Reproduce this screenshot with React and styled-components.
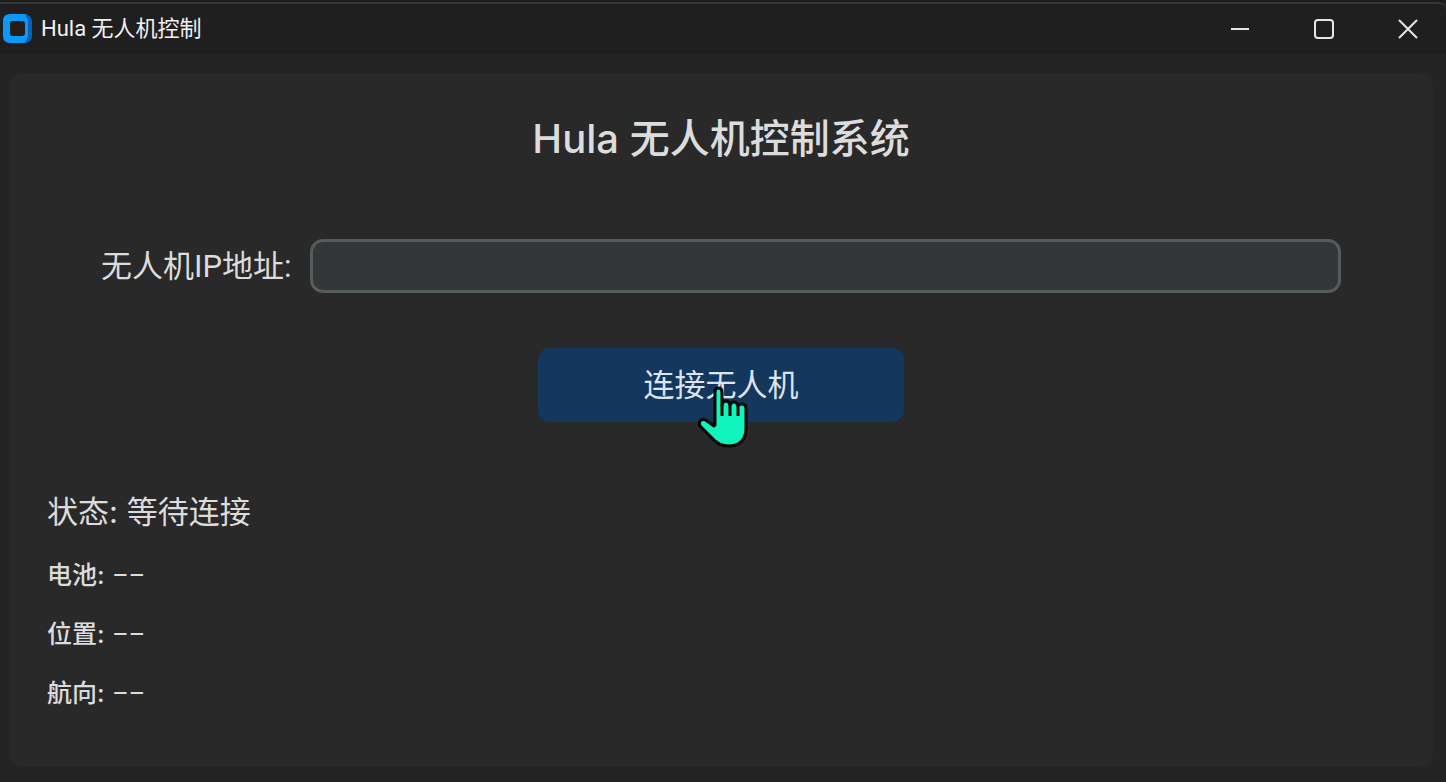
import React from "react";
import styled, { createGlobalStyle } from "styled-components";

const GlobalStyle = createGlobalStyle`
  * { box-sizing: border-box; }
  body {
    margin: 0;
    background: #242424;
    color: #dcdcdc;
    font-family: Roboto, "Noto Sans CJK SC", sans-serif;
  }
`;

const Window = styled.div`
  min-height: 100vh;
  display: flex;
  flex-direction: column;
  background: #242424;
  border-top: 2px solid #1c1c1c;
`;

const TitleBar = styled.header`
  display: flex;
  align-items: center;
  height: 52px;
  padding-left: 3px;
  background: #1f1f1f;
  border-top: 2px solid #363636;
  border-top-right-radius: 8px;
`;

const AppName = styled.span`
  flex: 1;
  margin-left: 8px;
  font-size: 22px;
  line-height: 32px;
  color: #f2f2f2;
`;

const WindowControls = styled.div`
  display: flex;
  gap: 8px;
`;

const WindowButton = styled.button`
  display: grid;
  place-items: center;
  width: 76px;
  height: 48px;
  padding: 0;
  border: 0;
  background: none;
  color: #e6e6e6;
`;

const Panel = styled.main`
  flex: 1;
  display: flex;
  flex-direction: column;
  margin: 19px 13px 15px 9px;
  padding: 36px 38px 0;
  border-radius: 14px;
  background: #292929;
`;

const Heading = styled.h1`
  margin: 0;
  font-family: Inter, "Noto Sans CJK SC", sans-serif;
  font-size: 40px;
  line-height: 60px;
  font-weight: 500;
  text-align: center;
`;

const AddressRow = styled.div`
  display: flex;
  align-items: center;
  gap: 18px;
  margin: 70px 54px 0;
`;

const AddressLabel = styled.label`
  padding-top: 2px;
  font-size: 31px;
  line-height: 48px;
`;

const AddressInput = styled.input`
  flex: 1;
  min-width: 0;
  height: 54px;
  padding: 0 14px;
  border: 3px solid #565b5e;
  border-radius: 13px;
  outline: 0;
  background: #343638;
  color: #dcdcdc;
  font: inherit;
  font-size: 31px;
`;

const ConnectButton = styled.button`
  position: relative;
  align-self: center;
  width: 366px;
  height: 74px;
  margin-top: 55px;
  padding: 0 0 6px;
  border: 0;
  border-radius: 12px;
  background: #14375e;
  color: #dce4ee;
  font: inherit;
  font-size: 31px;
`;

const Pointer = styled.svg`
  position: absolute;
  left: 158px;
  top: 37px;
  pointer-events: none;
`;

const StatusList = styled.section`
  display: flex;
  flex-direction: column;
  margin-top: 66px;
  font-family: Inter, "Noto Sans CJK SC", sans-serif;
`;

const Status = styled.p`
  margin: 0 0 10px;
  font-size: 31px;
  line-height: 48px;
`;

const Reading = styled.p`
  margin: 0;
  font-size: 25px;
  line-height: 58px;
  font-weight: 500;
`;

const Value = styled.span`
  margin-left: 1px;
  font-family: Roboto, sans-serif;
  font-weight: 400;
`;

const readings = ["电池", "位置", "航向"];

export default function App() {
  return (
    <>
      <GlobalStyle />
      <Window>
        <TitleBar>
          <svg width="30" height="30" viewBox="0 0 30 30" aria-hidden="true">
            <path d="M7 0H23L26 4V25L23 29H7Q0 29 0 22V7Q0 0 7 0Z" fill="#0c98f8" />
            <path d="M22 0Q29 1 29 8V22Q29 28 22 29L25 22V7Z" fill="#0861b4" />
            <rect x="7" y="7" width="15" height="15" rx="3" fill="#241d1a" />
          </svg>
          <AppName>Hula 无人机控制</AppName>
          <WindowControls>
            <WindowButton aria-label="最小化">
              <svg width="20" height="20"><path d="M1 10H19" stroke="currentColor" strokeWidth="2" /></svg>
            </WindowButton>
            <WindowButton aria-label="最大化">
              <svg width="20" height="20" fill="none"><rect x="1" y="1" width="18" height="18" rx="3" stroke="currentColor" strokeWidth="2" /></svg>
            </WindowButton>
            <WindowButton aria-label="关闭">
              <svg width="20" height="20"><path d="M1 1L19 19M19 1L1 19" stroke="currentColor" strokeWidth="2" /></svg>
            </WindowButton>
          </WindowControls>
        </TitleBar>
        <Panel>
          <Heading>Hula 无人机控制系统</Heading>
          <AddressRow>
            <AddressLabel htmlFor="ip">无人机IP地址:</AddressLabel>
            <AddressInput id="ip" type="text" />
          </AddressRow>
          <ConnectButton type="button">
            连接无人机
            <Pointer width="52" height="66" viewBox="0 0 52 66" aria-hidden="true">
              <path
                d="M19 40V7Q19 3 22 3Q26 3 26 7V20Q27 16 30 16Q33 16 34 20Q35 17 38 17Q41 17 42 21Q43 19 46 19Q50 19 50 24V43Q50 61 32 61Q25 61 19 56L5 42Q2 39 4 36Q7 33 11 36L18 41Z"
                fill="#10f5bb" stroke="#050505" strokeWidth="3" strokeLinejoin="round"
              />
              <path d="M26 19V31M34 19V31M42 20V31" stroke="#050505" strokeWidth="3" fill="none" />
            </Pointer>
          </ConnectButton>
          <StatusList>
            <Status>状态: 等待连接</Status>
            {readings.map((name) => (
              <Reading key={name}>{name}: <Value>––</Value></Reading>
            ))}
          </StatusList>
        </Panel>
      </Window>
    </>
  );
}
